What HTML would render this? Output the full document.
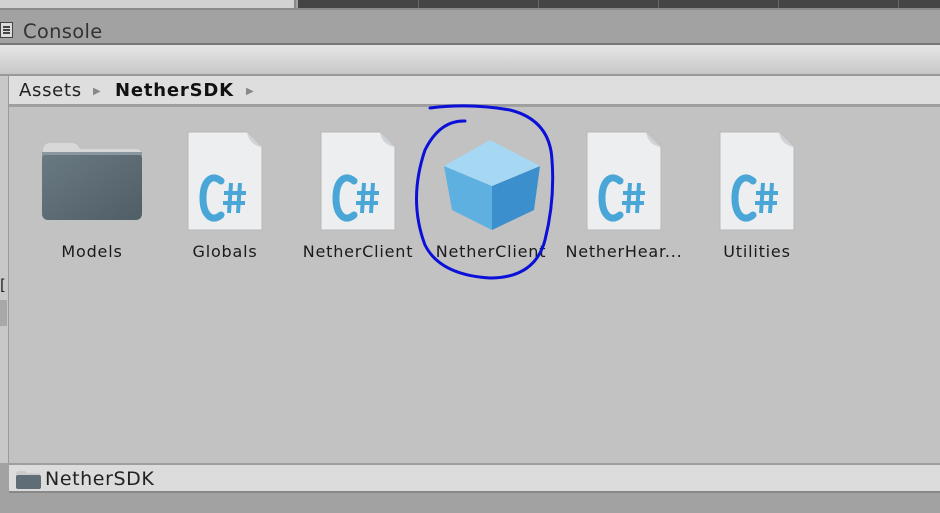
<!DOCTYPE html>
<html><head><meta charset="utf-8"><style>
*{margin:0;padding:0;box-sizing:border-box}
body{width:940px;height:513px;overflow:hidden;background:#a2a2a2;font-family:"DejaVu Sans","Liberation Sans",sans-serif;position:relative}
.a{position:absolute}
.lbl{position:absolute;top:242px;width:130px;text-align:center;font-size:16px;color:#1a1a1a;letter-spacing:0.8px;white-space:nowrap}
</style></head><body>
<div class="a" style="left:0;top:0;width:296px;height:8px;background:#d2d2d2;border-right:2px solid #888"></div>
<div class="a" style="left:298px;top:0;width:642px;height:8px;background:#454545"></div>
<div class="a" style="left:418px;top:0;width:1px;height:8px;background:#666"></div>
<div class="a" style="left:538px;top:0;width:1px;height:8px;background:#666"></div>
<div class="a" style="left:658px;top:0;width:1px;height:8px;background:#666"></div>
<div class="a" style="left:778px;top:0;width:1px;height:8px;background:#666"></div>
<div class="a" style="left:898px;top:0;width:1px;height:8px;background:#666"></div>
<div class="a" style="left:0;top:8px;width:940px;height:2px;background:#8a8a8a"></div>
<div class="a" style="left:0;top:22px;width:13px;height:16px;border:1.5px solid #444;background:#ddd"></div>
<div class="a" style="left:3px;top:26px;width:7px;height:1.5px;background:#444;box-shadow:0 3px 0 #444,0 6px 0 #444"></div>
<div class="a" style="left:23px;top:20px;font-size:19.5px;color:#333;letter-spacing:0.3px">Console</div>
<div class="a" style="left:0;top:43px;width:940px;height:2px;background:#777"></div>
<div class="a" style="left:0;top:45px;width:940px;height:30px;background:linear-gradient(#e6e6e6,#c6c6c6)"></div>
<div class="a" style="left:0;top:74px;width:940px;height:2px;background:#999"></div>
<div class="a" style="left:0;top:76px;width:9px;height:387px;background:#c8c8c8;border-right:1px solid #9a9a9a"></div>
<div class="a" style="left:0;top:300px;width:7px;height:26px;background:#a8a8a8"></div>
<div class="a" style="left:0;top:276px;font-size:15px;color:#222">[</div>
<div class="a" style="left:9px;top:76px;width:931px;height:30px;background:#dedede;border-bottom:2px solid #9e9e9e"></div>
<div class="a" style="left:19px;top:80px;font-size:18px;color:#222;letter-spacing:0.7px">Assets</div>
<div class="a" style="left:93px;top:86px;font-size:10px;color:#888">▶</div>
<div class="a" style="left:115px;top:80px;font-size:18px;color:#111;font-weight:bold;letter-spacing:0.8px">NetherSDK</div>
<div class="a" style="left:246px;top:86px;font-size:10px;color:#888">▶</div>
<div class="a" style="left:9px;top:107px;width:931px;height:356px;background:#c2c2c2"></div>
<svg class="a" style="left:40px;top:138px" width="104" height="86" viewBox="0 0 104 86">
<defs><linearGradient id="f" x1="0" y1="0" x2="1" y2="1"><stop offset="0" stop-color="#6a7a83"/><stop offset="1" stop-color="#505e66"/></linearGradient></defs>
<path d="M3 14 Q3 5 10 5 H32 Q37 5 40 11 H96 Q101 11 101 16 V24 H3Z" fill="#d8d8d8"/>
<rect x="2" y="14" width="100" height="68" rx="6" fill="url(#f)"/>
<rect x="2" y="14" width="100" height="3" fill="#8a979e"/>
</svg>
<svg width="0" height="0" style="position:absolute"><defs>
<symbol id="cs" viewBox="0 0 76 100">
<path d="M1 1 H60 L75 16 V99 H1Z" fill="#eceef0" stroke="#b8b8b8"/>
<path d="M60 1 Q62 14 75 16 Z" fill="#cfd3d8"/>
<path d="M34 50 Q28 45 23 48 Q16 53 16 67 Q16 81 23 86 Q28 89 34 84" fill="none" stroke="#4aa6d6" stroke-width="7" stroke-linecap="round"/>
<path d="M44 52 L42 82 M53 52 L51 82 M37 62 H59 M36 72 H58" stroke="#4aa6d6" stroke-width="4"/>
</symbol></defs></svg>
<svg class="a" style="left:187px;top:131px" width="76" height="100"><use href="#cs"/></svg>
<svg class="a" style="left:320px;top:131px" width="76" height="100"><use href="#cs"/></svg>
<svg class="a" style="left:586px;top:131px" width="76" height="100"><use href="#cs"/></svg>
<svg class="a" style="left:719px;top:131px" width="76" height="100"><use href="#cs"/></svg>
<svg class="a" style="left:440px;top:136px" width="104" height="98" viewBox="0 0 104 98">
<path d="M4 30 L52 50 L52 94 L12 74Z" fill="#5eb0e0"/>
<path d="M52 50 L100 30 L94 74 L52 94Z" fill="#3b8fcc"/>
<path d="M4 30 L50 4 L100 30 L52 50Z" fill="#a6d8f4"/>
</svg>
<div class="lbl" style="left:27px">Models</div>
<div class="lbl" style="left:160px">Globals</div>
<div class="lbl" style="left:293px">NetherClient</div>
<div class="lbl" style="left:426px">NetherClient</div>
<div class="lbl" style="left:559px">NetherHear...</div>
<div class="lbl" style="left:692px">Utilities</div>
<svg class="a" style="left:0;top:0" width="940" height="513">
<path d="M465 121 Q440 120 425 150 Q408 200 425 245 Q440 275 490 278 Q535 278 545 240 Q555 200 552 160 Q550 120 510 110 Q470 103 430 108" fill="none" stroke="#0a10d8" stroke-width="3" stroke-linecap="round"/>
</svg>
<div class="a" style="left:9px;top:463px;width:931px;height:30px;background:#dcdcdc;border-top:2px solid #9e9e9e;border-bottom:2px solid #888"></div>
<svg class="a" style="left:15px;top:470px" width="27" height="20" viewBox="0 0 27 20"><path d="M1 4 Q1 1 4 1 H10 L12 3 H25 V7 H1Z" fill="#ccc"/><rect x="1" y="5" width="25" height="14" rx="2" fill="#5f6e76"/></svg>
<div class="a" style="left:45px;top:468px;font-size:19px;color:#222;letter-spacing:0.6px">NetherSDK</div>
</body></html>
